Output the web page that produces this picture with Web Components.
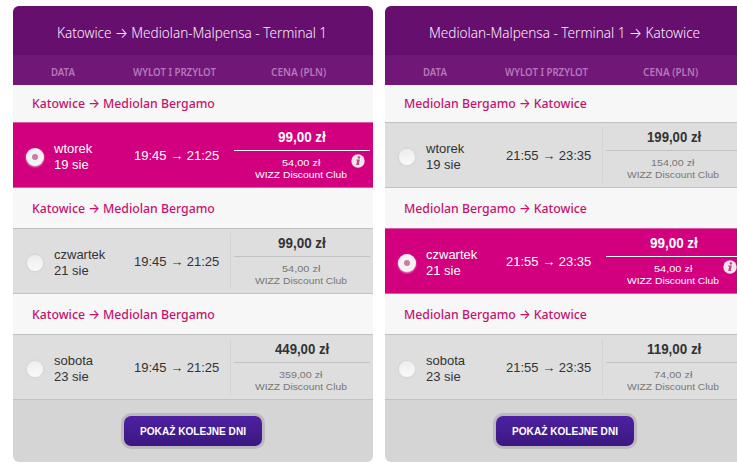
<!DOCTYPE html>
<html lang="pl">
<head>
<meta charset="utf-8">
<title>Wybór lotu</title>
<style>
html,body{margin:0;background:#fff;overflow:hidden}
body{width:737px;height:474px;font-family:"Liberation Sans",Arial,sans-serif}
main{display:flex;gap:12px;padding:6px 0 0 13px}
</style>
</head>
<body>
<main>
<flight-panel heading="Katowice → Mediolan-Malpensa - Terminal 1" heading-width="270">
  <flight-route width="183">Katowice → Mediolan Bergamo</flight-route>
  <flight-row selected day="wtorek" date="19 sie" time="19:45 → 21:25" price="99,00 zł" club="54,00 zł"></flight-row>
  <flight-route width="183">Katowice → Mediolan Bergamo</flight-route>
  <flight-row day="czwartek" date="21 sie" time="19:45 → 21:25" price="99,00 zł" club="54,00 zł"></flight-row>
  <flight-route width="183">Katowice → Mediolan Bergamo</flight-route>
  <flight-row day="sobota" date="23 sie" time="19:45 → 21:25" price="449,00 zł" club="359,00 zł"></flight-row>
</flight-panel>
<flight-panel heading="Mediolan-Malpensa - Terminal 1 → Katowice" heading-width="271">
  <flight-route width="183">Mediolan Bergamo → Katowice</flight-route>
  <flight-row day="wtorek" date="19 sie" time="21:55 → 23:35" price="199,00 zł" club="154,00 zł"></flight-row>
  <flight-route width="183">Mediolan Bergamo → Katowice</flight-route>
  <flight-row selected day="czwartek" date="21 sie" time="21:55 → 23:35" price="99,00 zł" club="54,00 zł"></flight-row>
  <flight-route width="183">Mediolan Bergamo → Katowice</flight-route>
  <flight-row day="sobota" date="23 sie" time="21:55 → 23:35" price="119,00 zł" club="74,00 zł"></flight-row>
</flight-panel>
</main>
<script>
/* Single line of text squeezed or stretched to a given width. */
class FitText extends HTMLElement {
  connectedCallback() {
    if (!this.shadowRoot) this.attachShadow({mode:'open'}).innerHTML =
      '<style>:host{display:block;white-space:nowrap}span{display:inline-block;transform-origin:0 50%}</style><span><slot></slot></span>';
    const s = this.shadowRoot.querySelector('span'), w = +this.getAttribute('width');
    this.style.width = w + 'px';
    s.style.transform = 'scaleX(' + w / s.offsetWidth + ')';
  }
}
customElements.define('fit-text', FitText);

class FlightRoute extends HTMLElement {
  connectedCallback() {
    this.attachShadow({mode:'open'}).innerHTML = `<style>
      :host{display:flex;align-items:center;height:40px;box-sizing:border-box;padding:0 0 1px 19px;background:#f7f7f7;
        color:#c4136f;font:500 13px/20px "Noto Sans",Inter,sans-serif}
      :host(:first-child){height:37px;padding-bottom:2px}
      </style><fit-text width="${this.getAttribute('width')}"><slot></slot></fit-text>`;
  }
}
customElements.define('flight-route', FlightRoute);

class FlightRadio extends HTMLElement {
  connectedCallback() {
    this.attachShadow({mode:'open'}).innerHTML = `<style>
      :host{display:grid;place-items:center;width:16px;height:16px;border-radius:50%;
        background:linear-gradient(#ededed,#fafafa);box-shadow:0 0 2px 1px #d3d3d3}
      :host([on]){width:18px;height:18px;background:#f5f2f4;box-shadow:0 1px 2px #e9a9cd}
      i{display:none;width:6px;height:6px;border-radius:50%;background:#cc7ca6}
      :host([on]) i{display:block}
      </style><i></i>`;
  }
}
customElements.define('flight-radio', FlightRadio);

class FlightRow extends HTMLElement {
  connectedCallback() {
    const a = n => this.getAttribute(n), on = this.hasAttribute('selected');
    const wide = a('price').length > 8, clubWide = a('club').length > 8;
    this.attachShadow({mode:'open'}).innerHTML = `<style>
      :host{display:grid;grid-template-columns:44px 77px 96px 142px;position:relative;height:66px;box-sizing:border-box;
        background:#dedede;color:#333;border-top:1px solid #bfbfbf;border-bottom:1px solid #c2c2c2;
        font:13px/16px "Liberation Sans",Arial,sans-serif}
      :host([selected]){background:#d2007e;color:#fff;border-top-color:#da5aa6;border-bottom-color:#da5aa6}
      .radio{display:grid;place-items:center;padding-top:4px}
      .date{padding:18px 0 0;margin-left:-3px}
      .time{padding-top:25px}
      .price{display:flex;flex-direction:column;align-items:center;margin:4px 0;border-left:1px solid #d4d4d4}
      :host([selected]) .price{border-color:transparent}
      .main{font-size:14px;font-weight:bold;padding-top:2px;margin-left:1px}
      hr{width:136px;height:1px;border:0;background:#c2c2c2;margin:5px 0 0}
      :host([selected]) hr{background:#fff}
      .club{color:#777;font-size:9.5px;line-height:12px;margin-left:-2px}
      .club.first{margin-top:6px}
      :host([selected]) .club{color:#fff}
      svg{position:absolute;left:338px;top:31px;width:14px;height:14px}
      </style>
      <div class="radio"><flight-radio ${on ? 'on' : ''}></flight-radio></div>
      <div class="date">${a('day')}<br>${a('date')}</div>
      <div class="time"><fit-text width="85">${a('time')}</fit-text></div>
      <div class="price">
        <fit-text class="main" width="${wide ? 54.5 : 48}">${a('price')}</fit-text>
        <hr>
        <fit-text class="club first" width="${clubWide ? 44 : 38}">${a('club')}</fit-text>
        <fit-text class="club" width="92">WIZZ Discount Club</fit-text>
      </div>
      ${on ? '<svg viewBox="0 0 14 14"><circle cx="7" cy="7" r="6.7" fill="#f6e4ee"/><circle cx="7.9" cy="3.4" r="1.2" fill="#b3457f"/><path d="M5.2 6H8.2L7.1 10.3H8.3M6.9 6 5.9 10.5H7.5" stroke="#b3457f" stroke-width="1.1" fill="none"/></svg>' : ''}`;
  }
}
customElements.define('flight-row', FlightRow);

class MoreButton extends HTMLElement {
  connectedCallback() {
    this.attachShadow({mode:'open'}).innerHTML = `<style>
      :host{display:block}
      button{display:grid;place-items:center;width:138px;height:30px;padding:2px 0 0;border:0;border-radius:7px;
        background:linear-gradient(#4e21a2,#3b1780);box-shadow:0 0 0 3px #bcb9c0;color:#fff;
        font:bold 10px/14px "Liberation Sans",Arial,sans-serif}
      </style><button><fit-text width="106"><slot></slot></fit-text></button>`;
  }
}
customElements.define('more-button', MoreButton);

class FlightPanel extends HTMLElement {
  connectedCallback() {
    this.attachShadow({mode:'open'}).innerHTML = `<style>
      :host{display:block;flex:0 0 360px;height:456px;border-radius:6px;overflow:hidden;background:#d5d5d5}
      header{display:flex;justify-content:center;align-items:center;height:49px;background:#660f6e;color:#fbeffb;
        font:350 15px/24px "Noto Sans",Inter,sans-serif;box-sizing:border-box;padding:2px 2px 0 0}
      .cols{display:grid;grid-template-columns:82px 138px 1fr;align-items:center;height:30px;box-sizing:border-box;
        padding:3px 0 0 38px;background:#711777;color:#b577ba;font:600 10px/14px "Noto Sans","Open Sans",sans-serif}
      footer{display:flex;justify-content:center;padding-top:16px}
      </style>
      <header><fit-text width="${this.getAttribute('heading-width')}">${this.getAttribute('heading')}</fit-text></header>
      <div class="cols"><fit-text width="24">DATA</fit-text><fit-text width="83">WYLOT I PRZYLOT</fit-text><fit-text width="55">CENA (PLN)</fit-text></div>
      <section><slot></slot></section>
      <footer><more-button>POKAŻ KOLEJNE DNI</more-button></footer>`;
  }
}
customElements.define('flight-panel', FlightPanel);
</script>
</body>
</html>
